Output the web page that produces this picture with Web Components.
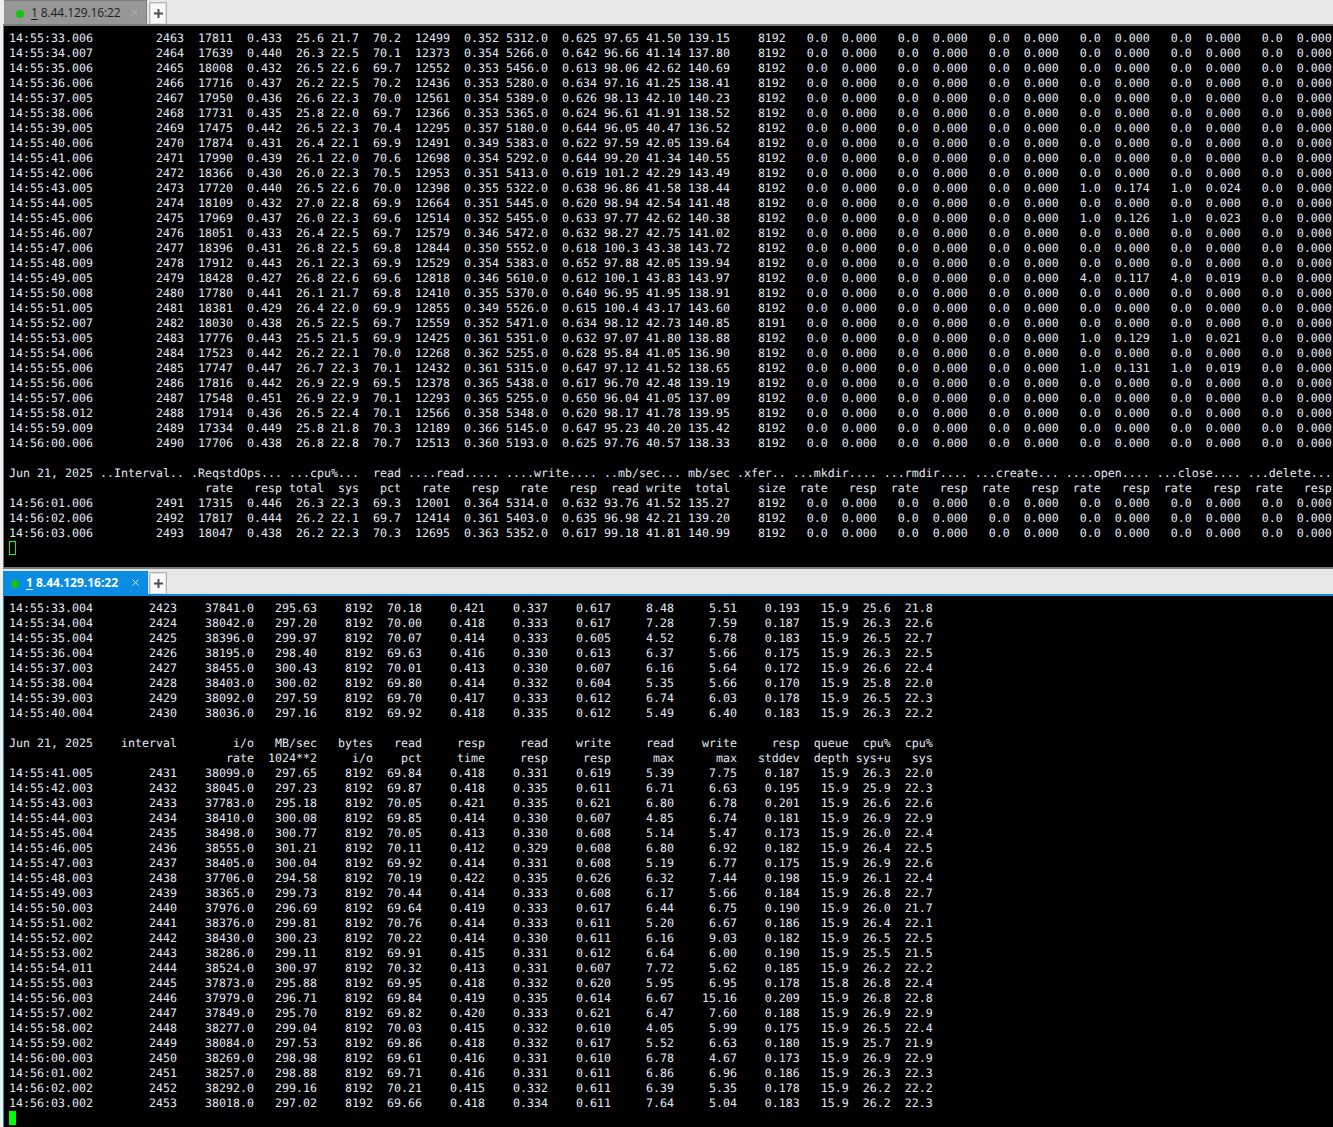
<!DOCTYPE html>
<html lang="en">
<head>
<meta charset="utf-8">
<title>8.44.129.16:22</title>
<style>
html,body{margin:0;padding:0;background:#f0f0f0;overflow:hidden}
body{width:1333px;height:1127px;font-family:"Open Sans","Liberation Sans",sans-serif}
term-app{height:1127px}
</style>
</head>
<body>
<term-app>
  <term-pane label="8.44.129.16:22" num="1">
    <term-screen id="a"></term-screen>
  </term-pane>
  <term-pane active label="8.44.129.16:22" num="1">
    <term-screen id="b"></term-screen>
  </term-pane>
</term-app>

<script>
class TermApp extends HTMLElement{
  constructor(){super();this.attachShadow({mode:'open'}).innerHTML=`<style>
    :host{display:grid;grid-template-rows:569px 558px;overflow:hidden;background:#f0f0f0}
  </style><slot></slot>`;}
}
class TermTab extends HTMLElement{
  static get observedAttributes(){return ['num','label'];}
  constructor(){super();this.attachShadow({mode:'open'}).innerHTML=`<style>
    :host{display:flex;align-items:center;box-sizing:border-box;width:143px;height:100%;
      background:#979797;color:#1c1c1c;font:12px/1 "Open Sans","Liberation Sans",sans-serif;
      border-top:1px solid #7d7d7d;border-right:1px solid #7d7d7d;padding:2px 0 0 12px}
    :host([active]){width:145px;background:#0a8ce2;color:#fff;font-weight:700;border:0;padding:2px 0 0 8px}
    .dot{width:8px;height:8px;border-radius:50%;background:#11c611;flex:none;margin-right:7px}
    .t{white-space:pre;letter-spacing:-.1px;padding-bottom:1px}
    :host([active]) .t{letter-spacing:-.02px}
    u{text-underline-offset:2px}
    .x{margin-left:auto;margin-right:8px;margin-bottom:3px;width:7px;height:7px;flex:none;color:#b4b4b4;display:flex}
    :host([active]) .x{color:#cfe8fa;margin-right:9px}
    svg{display:block}
  </style><span class="dot"></span><span class="t"><u id="n"></u> <span id="l"></span></span>
  <span class="x"><svg width="7" height="7" viewBox="0 0 7 7"><path d="M.5 .5L6.5 6.5M6.5 .5L.5 6.5" stroke="currentColor" stroke-width="1" fill="none"/></svg></span>`;}
  attributeChangedCallback(name,o,v){
    this.shadowRoot.getElementById(name==='num'?'n':'l').textContent=v;
  }
}
class TermPlus extends HTMLElement{
  constructor(){super();this.attachShadow({mode:'open'}).innerHTML=`<style>
    :host{display:flex;align-items:center;justify-content:center;box-sizing:border-box;width:18px;
      background:#f9f9f9;border:1px solid #b4b4b4;border-bottom:0;box-shadow:inset 0 0 0 1px #e0e0e0}
    svg{display:block}
  </style><svg width="9" height="9" viewBox="0 0 9 9"><path d="M4.5 0V9M0 4.5H9" stroke="#505050" stroke-width="2" fill="none"/></svg>`;}
}
class TermPane extends HTMLElement{
  constructor(){super();this.attachShadow({mode:'open'}).innerHTML=`<style>
    :host{display:flex;flex-direction:column;min-height:0;margin-left:3px;overflow:hidden;--line:#7c7c7c}
    :host([active]){--line:#0a8ce2}
    .bar{display:flex;flex:none;box-sizing:border-box;height:26px;background:#e7e7e7;margin-left:-3px;
      border-bottom:2px solid var(--line);padding:0 0 0 4px;overflow:visible}
    :host([active]) .bar{height:27px;padding:2px 0 0 3px}
    .tabs{display:flex;gap:2px;height:24px}
    :host([active]) .tabs{gap:1px;height:23px}
    term-plus{margin:2px 0 0 0}
    :host([active]) term-plus{margin:1px 0 0 0}
    .body{flex:1;min-height:0;background:#000;border-left:1px solid var(--line);overflow:hidden}
    :host(:not([active])) .body{border-bottom:2px solid var(--line)}
  </style>
  <div class="bar"><div class="tabs"><term-tab id="t"></term-tab><term-plus></term-plus></div></div>
  <div class="body"><slot></slot></div>`;}
  connectedCallback(){
    const t=this.shadowRoot.getElementById('t');
    t.setAttribute('num',this.getAttribute('num'));
    t.setAttribute('label',this.getAttribute('label'));
    if(this.hasAttribute('active'))t.setAttribute('active','');
  }
}
class TermScreen extends HTMLElement{
  constructor(){super();this.attachShadow({mode:'open'}).innerHTML=`<style>
    :host{display:block;padding:5px 0 0 5px;color:#e0ebf5;background:#000}
    pre{margin:0;font:11.63px/15px "DejaVu Sans Mono","Liberation Mono",monospace;white-space:pre;
      text-rendering:geometricPrecision;width:1340px;overflow:hidden}
    .cur{display:inline-block;box-sizing:border-box;width:7px;height:14px;vertical-align:top;margin-top:0}
    .hollow{border:1px solid #00ff00}
    .solid{background:#00ff00}
  </style><pre id="p"></pre>`;}
  set content(v){
    const p=this.shadowRoot.getElementById('p');
    p.textContent=v.text+'\n';
    const c=document.createElement('span');
    c.className='cur '+v.cursor;
    p.appendChild(c);
  }
}
customElements.define('term-tab',TermTab);
customElements.define('term-plus',TermPlus);
customElements.define('term-pane',TermPane);
customElements.define('term-screen',TermScreen);
customElements.define('term-app',TermApp);

function fmt(ends,cells){
  let s=cells[0]||'';
  for(let i=1;i<cells.length;i++){
    const v=cells[i];
    s=s.padEnd(ends[i-1]-v.length,' ')+v;
  }
  return s;
}

/* ---- top: file workload ---- */
const topEnds=[25,32,39,45,50,56,63,70,77,84,90,96,103,111,117,124,130,137,143,150,156,163,169,176,182,189];
const Z=['0.0','0.000'];
function topRow(line,extra){
  const c=line.split(' ');
  let tail=[...Z,...Z,...Z,...Z,...Z,...Z];
  if(extra){tail=[...Z,...Z,...Z,extra[0],extra[1],extra[2],extra[3],...Z];}
  return fmt(topEnds,[...c,...tail]);
}
const topA=`14:55:33.006 2463 17811 0.433 25.6 21.7 70.2 12499 0.352 5312.0 0.625 97.65 41.50 139.15 8192
14:55:34.007 2464 17639 0.440 26.3 22.5 70.1 12373 0.354 5266.0 0.642 96.66 41.14 137.80 8192
14:55:35.006 2465 18008 0.432 26.5 22.6 69.7 12552 0.353 5456.0 0.613 98.06 42.62 140.69 8192
14:55:36.006 2466 17716 0.437 26.2 22.5 70.2 12436 0.353 5280.0 0.634 97.16 41.25 138.41 8192
14:55:37.005 2467 17950 0.436 26.6 22.3 70.0 12561 0.354 5389.0 0.626 98.13 42.10 140.23 8192
14:55:38.006 2468 17731 0.435 25.8 22.0 69.7 12366 0.353 5365.0 0.624 96.61 41.91 138.52 8192
14:55:39.005 2469 17475 0.442 26.5 22.3 70.4 12295 0.357 5180.0 0.644 96.05 40.47 136.52 8192
14:55:40.006 2470 17874 0.431 26.4 22.1 69.9 12491 0.349 5383.0 0.622 97.59 42.05 139.64 8192
14:55:41.006 2471 17990 0.439 26.1 22.0 70.6 12698 0.354 5292.0 0.644 99.20 41.34 140.55 8192
14:55:42.006 2472 18366 0.430 26.0 22.3 70.5 12953 0.351 5413.0 0.619 101.2 42.29 143.49 8192
14:55:43.005 2473 17720 0.440 26.5 22.6 70.0 12398 0.355 5322.0 0.638 96.86 41.58 138.44 8192
14:55:44.005 2474 18109 0.432 27.0 22.8 69.9 12664 0.351 5445.0 0.620 98.94 42.54 141.48 8192
14:55:45.006 2475 17969 0.437 26.0 22.3 69.6 12514 0.352 5455.0 0.633 97.77 42.62 140.38 8192
14:55:46.007 2476 18051 0.433 26.4 22.5 69.7 12579 0.346 5472.0 0.632 98.27 42.75 141.02 8192
14:55:47.006 2477 18396 0.431 26.8 22.5 69.8 12844 0.350 5552.0 0.618 100.3 43.38 143.72 8192
14:55:48.009 2478 17912 0.443 26.1 22.3 69.9 12529 0.354 5383.0 0.652 97.88 42.05 139.94 8192
14:55:49.005 2479 18428 0.427 26.8 22.6 69.6 12818 0.346 5610.0 0.612 100.1 43.83 143.97 8192
14:55:50.008 2480 17780 0.441 26.1 21.7 69.8 12410 0.355 5370.0 0.640 96.95 41.95 138.91 8192
14:55:51.005 2481 18381 0.429 26.4 22.0 69.9 12855 0.349 5526.0 0.615 100.4 43.17 143.60 8192
14:55:52.007 2482 18030 0.438 26.5 22.5 69.7 12559 0.352 5471.0 0.634 98.12 42.73 140.85 8191
14:55:53.005 2483 17776 0.443 25.5 21.5 69.9 12425 0.361 5351.0 0.632 97.07 41.80 138.88 8192
14:55:54.006 2484 17523 0.442 26.2 22.1 70.0 12268 0.362 5255.0 0.628 95.84 41.05 136.90 8192
14:55:55.006 2485 17747 0.447 26.7 22.3 70.1 12432 0.361 5315.0 0.647 97.12 41.52 138.65 8192
14:55:56.006 2486 17816 0.442 26.9 22.9 69.5 12378 0.365 5438.0 0.617 96.70 42.48 139.19 8192
14:55:57.006 2487 17548 0.451 26.9 22.9 70.1 12293 0.365 5255.0 0.650 96.04 41.05 137.09 8192
14:55:58.012 2488 17914 0.436 26.5 22.4 70.1 12566 0.358 5348.0 0.620 98.17 41.78 139.95 8192
14:55:59.009 2489 17334 0.449 25.8 21.8 70.3 12189 0.366 5145.0 0.647 95.23 40.20 135.42 8192
14:56:00.006 2490 17706 0.438 26.8 22.8 70.7 12513 0.360 5193.0 0.625 97.76 40.57 138.33 8192`.split('\n');
const topB=`14:56:01.006 2491 17315 0.446 26.3 22.3 69.3 12001 0.364 5314.0 0.632 93.76 41.52 135.27 8192
14:56:02.006 2492 17817 0.444 26.2 22.1 69.7 12414 0.361 5403.0 0.635 96.98 42.21 139.20 8192
14:56:03.006 2493 18047 0.438 26.2 22.3 70.3 12695 0.363 5352.0 0.617 99.18 41.81 140.99 8192`.split('\n');
const extras={'14:55:43.005':['1.0','0.174','1.0','0.024'],'14:55:45.006':['1.0','0.126','1.0','0.023'],
 '14:55:49.005':['4.0','0.117','4.0','0.019'],'14:55:53.005':['1.0','0.129','1.0','0.021'],'14:55:55.006':['1.0','0.131','1.0','0.019']};
const tr=l=>topRow(l,extras[l.slice(0,12)]);
const topHead1='Jun 21, 2025 ..Interval.. .ReqstdOps... ...cpu%...  read ....read..... ....write.... ..mb/sec... mb/sec .xfer.. ...mkdir.... ...rmdir.... ...create... ....open.... ...close.... ...delete...';
const topHead2=fmt(topEnds,['','','rate','resp','total','sys','pct','rate','resp','rate','resp','read','write','total','size','rate','resp','rate','resp','rate','resp','rate','resp','rate','resp','rate','resp']);
const topText=[...topA.map(tr),'',topHead1,topHead2,...topB.map(tr)].join('\n');

/* ---- bottom: block workload ---- */
const botEnds=[24,35,44,52,59,68,77,86,95,104,113,120,126,132];
const botA=`14:55:33.004 2423 37841.0 295.63 8192 70.18 0.421 0.337 0.617 8.48 5.51 0.193 15.9 25.6 21.8
14:55:34.004 2424 38042.0 297.20 8192 70.00 0.418 0.333 0.617 7.28 7.59 0.187 15.9 26.3 22.6
14:55:35.004 2425 38396.0 299.97 8192 70.07 0.414 0.333 0.605 4.52 6.78 0.183 15.9 26.5 22.7
14:55:36.004 2426 38195.0 298.40 8192 69.63 0.416 0.330 0.613 6.37 5.66 0.175 15.9 26.3 22.5
14:55:37.003 2427 38455.0 300.43 8192 70.01 0.413 0.330 0.607 6.16 5.64 0.172 15.9 26.6 22.4
14:55:38.004 2428 38403.0 300.02 8192 69.80 0.414 0.332 0.604 5.35 5.66 0.170 15.9 25.8 22.0
14:55:39.003 2429 38092.0 297.59 8192 69.70 0.417 0.333 0.612 6.74 6.03 0.178 15.9 26.5 22.3
14:55:40.004 2430 38036.0 297.16 8192 69.92 0.418 0.335 0.612 5.49 6.40 0.183 15.9 26.3 22.2`.split('\n');
const botB=`14:55:41.005 2431 38099.0 297.65 8192 69.84 0.418 0.331 0.619 5.39 7.75 0.187 15.9 26.3 22.0
14:55:42.003 2432 38045.0 297.23 8192 69.87 0.418 0.335 0.611 6.71 6.63 0.195 15.9 25.9 22.3
14:55:43.003 2433 37783.0 295.18 8192 70.05 0.421 0.335 0.621 6.80 6.78 0.201 15.9 26.6 22.6
14:55:44.003 2434 38410.0 300.08 8192 69.85 0.414 0.330 0.607 4.85 6.74 0.181 15.9 26.9 22.9
14:55:45.004 2435 38498.0 300.77 8192 70.05 0.413 0.330 0.608 5.14 5.47 0.173 15.9 26.0 22.4
14:55:46.005 2436 38555.0 301.21 8192 70.11 0.412 0.329 0.608 6.80 6.92 0.182 15.9 26.4 22.5
14:55:47.003 2437 38405.0 300.04 8192 69.92 0.414 0.331 0.608 5.19 6.77 0.175 15.9 26.9 22.6
14:55:48.003 2438 37706.0 294.58 8192 70.19 0.422 0.335 0.626 6.32 7.44 0.198 15.9 26.1 22.4
14:55:49.003 2439 38365.0 299.73 8192 70.44 0.414 0.333 0.608 6.17 5.66 0.184 15.9 26.8 22.7
14:55:50.003 2440 37976.0 296.69 8192 69.64 0.419 0.333 0.617 6.44 6.75 0.190 15.9 26.0 21.7
14:55:51.002 2441 38376.0 299.81 8192 70.76 0.414 0.333 0.611 5.20 6.67 0.186 15.9 26.4 22.1
14:55:52.002 2442 38430.0 300.23 8192 70.22 0.414 0.330 0.611 6.16 9.03 0.182 15.9 26.5 22.5
14:55:53.002 2443 38286.0 299.11 8192 69.91 0.415 0.331 0.612 6.64 6.00 0.190 15.9 25.5 21.5
14:55:54.011 2444 38524.0 300.97 8192 70.32 0.413 0.331 0.607 7.72 5.62 0.185 15.9 26.2 22.2
14:55:55.003 2445 37873.0 295.88 8192 69.95 0.418 0.332 0.620 5.95 6.95 0.178 15.8 26.8 22.4
14:55:56.003 2446 37979.0 296.71 8192 69.84 0.419 0.335 0.614 6.67 15.16 0.209 15.9 26.8 22.8
14:55:57.002 2447 37849.0 295.70 8192 69.82 0.420 0.333 0.621 6.47 7.60 0.188 15.9 26.9 22.9
14:55:58.002 2448 38277.0 299.04 8192 70.03 0.415 0.332 0.610 4.05 5.99 0.175 15.9 26.5 22.4
14:55:59.002 2449 38084.0 297.53 8192 69.86 0.418 0.332 0.617 5.52 6.63 0.180 15.9 25.7 21.9
14:56:00.003 2450 38269.0 298.98 8192 69.61 0.416 0.331 0.610 6.78 4.67 0.173 15.9 26.9 22.9
14:56:01.002 2451 38257.0 298.88 8192 69.71 0.416 0.331 0.611 6.86 6.96 0.186 15.9 26.3 22.3
14:56:02.002 2452 38292.0 299.16 8192 70.21 0.415 0.332 0.611 6.39 5.35 0.178 15.9 26.2 22.2
14:56:03.002 2453 38018.0 297.02 8192 69.66 0.418 0.334 0.611 7.64 5.04 0.183 15.9 26.2 22.3`.split('\n');
const br=l=>fmt(botEnds,l.split(' '));
const botHead1=fmt(botEnds,['Jun 21, 2025','interval','i/o','MB/sec','bytes','read','resp','read','write','read','write','resp','queue','cpu%','cpu%']);
const botHead2=fmt(botEnds,['','','rate','1024**2','i/o','pct','time','resp','resp','max','max','stddev','depth','sys+u','sys']);
const botText=[...botA.map(br),'',botHead1,botHead2,...botB.map(br)].join('\n');

document.getElementById('a').content={text:topText,cursor:'hollow'};
document.getElementById('b').content={text:botText,cursor:'solid'};
</script>
</body>
</html>
